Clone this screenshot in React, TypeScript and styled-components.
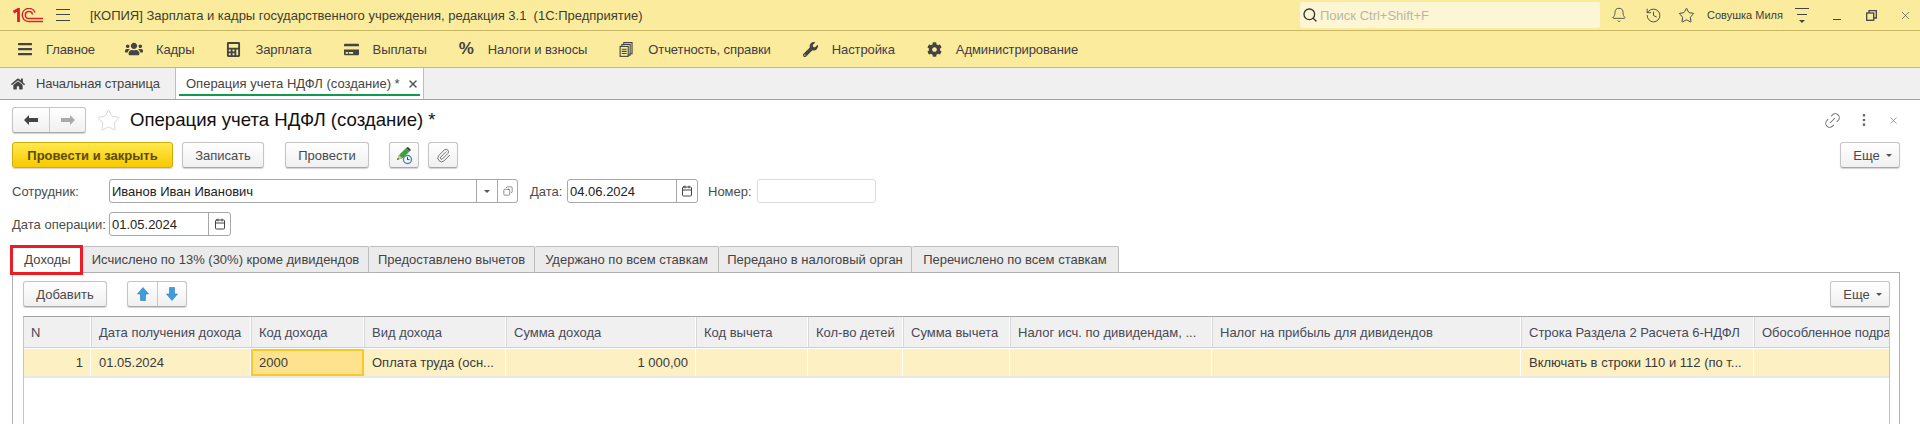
import React from 'react';
import styled, { createGlobalStyle } from 'styled-components';
import { FaBars, FaCalculator, FaCog, FaCreditCard, FaHome, FaUsers, FaWrench } from 'react-icons/fa';
import { Bell, Calendar, Copy, History, Link2, MoreVertical, Paperclip, Search, Star, X } from 'lucide-react';

const GlobalStyle = createGlobalStyle`
  html, body {
    margin: 0;
    height: 424px;
    overflow: hidden;
    background: #fff;
    font-family: "Liberation Sans", Arial, sans-serif;
    font-size: 13px;
    color: #4a4a4a;
  }
`;

const Page = styled.div`
  width: 1920px;
  height: 424px;
  overflow: hidden;
  display: flex;
  flex-direction: column;
`;

const TitleBar = styled.div`
  height: 30px;
  flex: none;
  display: flex;
  align-items: center;
  background: #fbec9d;
  border-bottom: 1px solid #c9b966;
`;

const LogoBox = styled.div`
  width: 56px;
  padding-left: 13px;
  box-sizing: border-box;
  display: flex;
`;

const Burger = styled.div`
  width: 14px;
  height: 12px;
  margin-right: 20px;
  border-top: 1px solid #444;
  border-bottom: 1px solid #444;
  box-sizing: border-box;
  position: relative;

  &::after {
    content: '';
    position: absolute;
    left: 0;
    right: 0;
    top: 4px;
    height: 1px;
    background: #444;
  }
`;

const AppTitle = styled.div`
  color: #403c30;
  flex: 1;
`;

const SearchBox = styled.div`
  width: 300px;
  height: 26px;
  flex: none;
  box-sizing: border-box;
  padding-left: 2px;
  border-radius: 2px;
  background: #fdf6d4;
  color: #b9b6a6;
  display: flex;
  align-items: center;
  gap: 2px;
`;

const TopIcons = styled.div`
  display: flex;
  align-items: center;
  width: 320px;
  flex: none;
  padding-left: 11px;
  box-sizing: border-box;
  color: #444;
`;

const TopSlot = styled.div<{ $w: number }>`
  width: ${p => p.$w}px;
  flex: none;
  display: flex;
  align-items: center;
`;

const UserName = styled.div`
  width: 88px;
  flex: none;
  font-size: 11px;
  color: #3e3e3e;
`;

const DropLines = styled.div`
  width: 14px;
  height: 15px;
  box-sizing: border-box;
  border-top: 1px solid #444;
  position: relative;

  &::before {
    content: '';
    position: absolute;
    left: 2px;
    right: 2px;
    top: 5px;
    height: 1px;
    background: #444;
  }

  &::after {
    content: '';
    position: absolute;
    left: 4px;
    bottom: 0;
    border: 3px solid transparent;
    border-top: 3px solid #444;
    border-bottom: 0;
  }
`;

const Minimize = styled.div`
  width: 8px;
  height: 1px;
  margin-top: 9px;
  background: #444;
`;

const MenuBar = styled.div`
  height: 36px;
  flex: none;
  display: flex;
  align-items: center;
  padding-left: 1px;
  background: #fbec9d;
  border-bottom: 1px solid #c9b966;
`;

const MenuItem = styled.div`
  display: flex;
  align-items: center;
  gap: 14px;
  padding: 0 16px;
  color: #403c4a;
  letter-spacing: -0.1px;
`;

const MenuIcon = styled.span<{ $size?: number }>`
  width: 15px;
  height: 18px;
  flex: none;
  display: flex;
  align-items: center;
  justify-content: center;
  color: #444;

  svg {
    width: ${p => p.$size ?? 15}px;
    height: ${p => p.$size ?? 15}px;
    flex: none;
  }
`;

const PercentIcon = styled.span`
  font-size: 17px;
  font-weight: 700;
  letter-spacing: 0;
`;

const TabsBar = styled.div`
  height: 31px;
  flex: none;
  display: flex;
  background: #f0f0f0;
  border-bottom: 1px solid #a5a5a5;
`;

const HomeTab = styled.div`
  width: 176px;
  box-sizing: border-box;
  padding-left: 11px;
  display: flex;
  align-items: center;
  gap: 11px;
  border-right: 1px solid #bdbdbd;
  color: #444;
  letter-spacing: -0.1px;

  svg {
    width: 14px;
    height: 14px;
    color: #444;
  }
`;

const ActiveTab = styled.div`
  width: 248px;
  box-sizing: border-box;
  padding: 0 0 0 10px;
  display: flex;
  align-items: center;
  background: #fff;
  border-right: 1px solid #bdbdbd;
  position: relative;
  color: #444;

  &::after {
    content: '';
    position: absolute;
    left: 3px;
    right: 3px;
    bottom: 3px;
    height: 2px;
    background: #0f9a4c;
  }
`;

const TabClose = styled.span`
  margin-left: 7px;
  display: flex;
  color: #555;
`;

const Form = styled.div`
  flex: none;
  display: flex;
  flex-direction: column;
  padding: 8px 20px 0 12px;
`;

const Row = styled.div<{ $h: number; $mb: number }>`
  height: ${p => p.$h}px;
  flex: none;
  margin-bottom: ${p => p.$mb}px;
  display: flex;
  align-items: center;
`;

const ButtonBase = styled.div<{ $w: number; $ml?: number }>`
  width: ${p => p.$w}px;
  height: 26px;
  flex: none;
  margin-left: ${p => p.$ml ?? 0}px;
  box-sizing: border-box;
  display: flex;
  align-items: center;
  justify-content: center;
  border: 1px solid #c4c4c4;
  border-bottom-color: #a8a8a8;
  border-radius: 3px;
  background: linear-gradient(#ffffff, #f0f0f0);
  box-shadow: 0 1px 1px rgba(0, 0, 0, 0.18);
  color: #4a4a4a;
`;

const PrimaryButton = styled(ButtonBase)`
  font-weight: 700;
  color: #5a4b00;
  border-color: #cfae0a;
  background: linear-gradient(#ffe94f, #f6c900);
`;

const MoreButton = styled(ButtonBase)`
  gap: 6px;
  padding-left: 5px;
  margin-left: auto;
`;

const Caret = styled.span`
  width: 0;
  height: 0;
  border: 3px solid transparent;
  border-top: 3px solid #555;
  border-bottom: 0;
`;

const Split = styled.div<{ $w: number; $ml?: number }>`
  width: ${p => p.$w}px;
  height: 26px;
  flex: none;
  margin-left: ${p => p.$ml ?? 0}px;
  display: grid;
  grid-template-columns: 1fr 1fr;
  box-sizing: border-box;
  border: 1px solid #c4c4c4;
  border-bottom-color: #a8a8a8;
  border-radius: 3px;
  background: linear-gradient(#ffffff, #f0f0f0);
  box-shadow: 0 1px 1px rgba(0, 0, 0, 0.18);
`;

const SplitPart = styled.div`
  display: flex;
  align-items: center;
  justify-content: center;

  & + & {
    border-left: 1px solid #c9c9c9;
  }
`;

const FormTitle = styled.div`
  margin-left: 9px;
  font-size: 18.6px;
  color: #111;
  flex: 1;
`;

const StarSlot = styled.div`
  margin-left: 10px;
  display: flex;
  color: #d4d4d4;
`;

const HeadTools = styled.div`
  display: flex;
  align-items: center;
  color: #666;
  gap: 14px;
  padding-right: 1px;

  svg:last-child {
    margin-left: 2px;
  }
`;

const FieldLabel = styled.div<{ $w: number; $ml?: number }>`
  width: ${p => p.$w}px;
  flex: none;
  margin-left: ${p => p.$ml ?? 0}px;
  color: #4c4c4c;
`;

const Field = styled.div<{ $w: number; $pale?: boolean }>`
  width: ${p => p.$w}px;
  height: 24px;
  flex: none;
  box-sizing: border-box;
  display: flex;
  align-items: center;
  border: 1px solid ${p => (p.$pale ? '#dcdcdc' : '#a8a8a8')};
  border-radius: 3px;
  background: #fff;
  color: #222;
`;

const FieldValue = styled.div`
  flex: 1;
  padding-left: 2px;
`;

const FieldAddon = styled.div<{ $w: number }>`
  width: ${p => p.$w}px;
  height: 100%;
  flex: none;
  display: flex;
  align-items: center;
  justify-content: center;
  box-sizing: border-box;
  border-left: 1px solid #a8a8a8;
  color: #444;
`;

const FormTabs = styled.div`
  height: 27px;
  flex: none;
  display: flex;
  margin: 10px 0 -1px;
`;

const FormTab = styled.div<{ $w: number; $active?: boolean }>`
  width: ${p => p.$w}px;
  flex: none;
  box-sizing: border-box;
  padding-top: 5px;
  display: flex;
  justify-content: center;
  background: ${p => (p.$active ? '#fff' : '#ebebeb')};
  border: 1px solid #bdbdbd;
  border-left-width: ${p => (p.$active ? 1 : 0)}px;
  border-bottom: ${p => (p.$active ? '0' : '1px solid #b0b0b0')};
  border-radius: 2px 2px 0 0;
  color: #444;
  position: relative;
  z-index: ${p => (p.$active ? 1 : 0)};

  ${p =>
    p.$active &&
    `&::after {
      content: '';
      position: absolute;
      left: -3px;
      top: -2px;
      width: 73px;
      height: 30px;
      box-sizing: border-box;
      border: 3px solid #ed1c24;
    }`}
`;

const TabPanel = styled.div`
  height: 220px;
  flex: none;
  box-sizing: border-box;
  padding: 8px 9px 0 10px;
  border: 1px solid #b0b0b0;
`;

const PanelToolbar = styled.div`
  height: 26px;
  display: flex;
  align-items: center;
  margin-bottom: 9px;
`;

const columns = '67px 160px 113px 142px 190px 112px 95px 107px 202px 309px 233px 137px';

const Table = styled.div`
  border: 1px solid #c4c4c4;
  border-top: 1px solid #a5a5a5;
  height: 180px;
  overflow: hidden;
`;

const HeaderRow = styled.div`
  display: grid;
  grid-template-columns: ${columns};
  height: 30px;
  background: #f0f0f0;
  border-bottom: 1px solid #cfcfcf;
`;

const HeaderCell = styled.div`
  box-sizing: border-box;
  padding: 8px 0 0 7px;
  border-right: 1px solid #fff;
  border-left: 1px solid #d8d8d8;
  white-space: nowrap;
  overflow: hidden;
  color: #48485a;

  &:first-child {
    border-left: 0;
  }
`;

const DataRow = styled.div`
  display: grid;
  grid-template-columns: ${columns};
  height: 27px;
  margin-top: 1px;
  background: #fdf0c3;
  border-bottom: 2px solid #e8e8e8;
  box-sizing: content-box;
`;

const DataCell = styled.div<{ $right?: boolean; $current?: boolean }>`
  box-sizing: border-box;
  display: flex;
  align-items: center;
  justify-content: ${p => (p.$right ? 'flex-end' : 'flex-start')};
  padding: ${p => (p.$right ? '0 7px 0 0' : p.$current ? '0 0 0 6px' : '0 0 0 8px')};
  border-right: 1px solid #fff;
  white-space: nowrap;
  overflow: hidden;
  color: #3a3a3a;
  ${p => p.$current && 'background: #fee28e; border: 2px solid #fcc924;'}
`;

const Pencil = () => (
  <svg width="20" height="20" viewBox="0 0 20 20">
    <path d="M3 15l2-5 7-7 4 3-7 7z" fill="#3da33d" />
    <path d="M12 3l2-1 3 3-1 1z" fill="#333" />
    <path d="M3 15l2-5 3 3z" fill="#e3c08c" />
    <path d="M3 15l1-2 1 1z" fill="#333" />
    <circle cx="13.5" cy="14.5" r="4" fill="#fff" stroke="#4a86b8" strokeWidth="1.4" />
    <path d="M13.5 12.2v2.5h2" fill="none" stroke="#333" strokeWidth="1" />
  </svg>
);

const Logo = () => (
  <svg width="30" height="15" viewBox="0 0 30 15">
    <g fill="none" stroke="#d8232a">
      <path d="M0.5 4.2L5.5 1.2V14" strokeWidth="2.8" />
      <path d="M22 4.5A6.6 6.6 0 1 0 16 13.6H30" strokeWidth="1.5" />
      <path d="M19.5 6.5A3.6 3.6 0 1 0 16 10.6H30" strokeWidth="1.5" />
    </g>
  </svg>
);

const DocsIcon = () => (
  <svg viewBox="0 0 15 16">
    <g fill="none" stroke="#444" strokeWidth="1.2">
      <path d="M4.6 3V0.7H13.4V12.5H11" />
      <path d="M2.6 5V2.7H11.4V14H9" />
      <rect x="0.7" y="4.7" width="8.6" height="10.6" />
      <path d="M2.4 7.7h5.2M2.4 10h5.2M2.4 12.3h5.2" />
    </g>
  </svg>
);

const RestoreIcon = () => (
  <svg width="11" height="11" viewBox="0 0 11 11">
    <g fill="none" stroke="#444" strokeWidth="1.3">
      <rect x="0.7" y="3" width="7" height="7.3" />
      <path d="M3 3V0.7H10.3V8H7.7" />
    </g>
  </svg>
);

const Arrow = ({ dir, color }: { dir: 'left' | 'right'; color: string }) => (
  <svg width="14" height="10" viewBox="0 0 14 10">
    <path d={dir === 'left' ? 'M0 5l5-5v3h9v4H5v3z' : 'M14 5L9 0v3H0v4h9v3z'} fill={color} />
  </svg>
);

const BlueArrow = ({ up }: { up?: boolean }) => (
  <svg width="12" height="14" viewBox="0 0 12 14">
    <path
      d={up ? 'M6 0.5L11.5 7H8.5V13.5H3.5V7H0.5z' : 'M6 13.5L11.5 7H8.5V0.5H3.5V7H0.5z'}
      fill="#3f9be0"
      stroke="#2b78b5"
      strokeWidth="0.6"
    />
  </svg>
);

const menu = [
  { icon: <FaBars />, size: 16, label: 'Главное' },
  { icon: <FaUsers />, size: 18, label: 'Кадры' },
  { icon: <FaCalculator />, size: 15, label: 'Зарплата' },
  { icon: <FaCreditCard />, size: 15, label: 'Выплаты' },
  { icon: <PercentIcon>%</PercentIcon>, size: 15, label: 'Налоги и взносы' },
  { icon: <DocsIcon />, size: 15, label: 'Отчетность, справки' },
  { icon: <FaWrench />, size: 15, label: 'Настройка' },
  { icon: <FaCog />, size: 15, label: 'Администрирование' },
];

const formTabs = [
  { w: 286, label: 'Исчислено по 13% (30%) кроме дивидендов' },
  { w: 166, label: 'Предоставлено вычетов' },
  { w: 184, label: 'Удержано по всем ставкам' },
  { w: 193, label: 'Передано в налоговый орган' },
  { w: 207, label: 'Перечислено по всем ставкам' },
];

const headers = [
  'N',
  'Дата получения дохода',
  'Код дохода',
  'Вид дохода',
  'Сумма дохода',
  'Код вычета',
  'Кол-во детей',
  'Сумма вычета',
  'Налог исч. по дивидендам, ...',
  'Налог на прибыль для дивидендов',
  'Строка Раздела 2 Расчета 6-НДФЛ',
  'Обособленное подразделение',
];

const App: React.FC = () => (
  <Page>
    <GlobalStyle />
    <TitleBar>
      <LogoBox>
        <Logo />
      </LogoBox>
      <Burger />
      <AppTitle>[КОПИЯ] Зарплата и кадры государственного учреждения, редакция 3.1&nbsp; (1С:Предприятие)</AppTitle>
      <SearchBox>
        <Search size={16} color="#333" />
        Поиск Ctrl+Shift+F
      </SearchBox>
      <TopIcons>
        <TopSlot $w={34}><Bell size={16} strokeWidth={1.3} /></TopSlot>
        <TopSlot $w={33}><History size={17} strokeWidth={1.3} /></TopSlot>
        <TopSlot $w={29}><Star size={17} strokeWidth={1.4} /></TopSlot>
        <UserName>Совушка Миля</UserName>
        <TopSlot $w={38}><DropLines /></TopSlot>
        <TopSlot $w={33}><Minimize /></TopSlot>
        <TopSlot $w={33}><RestoreIcon /></TopSlot>
        <TopSlot $w={20}><X size={13} strokeWidth={1.2} /></TopSlot>
      </TopIcons>
    </TitleBar>

    <MenuBar>
      {menu.map(item => (
        <MenuItem key={item.label}>
          <MenuIcon $size={item.size}>{item.icon}</MenuIcon>
          {item.label}
        </MenuItem>
      ))}
    </MenuBar>

    <TabsBar>
      <HomeTab>
        <FaHome />
        Начальная страница
      </HomeTab>
      <ActiveTab>
        Операция учета НДФЛ (создание) *
        <TabClose><X size={12} strokeWidth={3} /></TabClose>
      </ActiveTab>
    </TabsBar>

    <Form>
      <Row $h={24} $mb={10}>
        <Split $w={74}>
          <SplitPart><Arrow dir="left" color="#444" /></SplitPart>
          <SplitPart><Arrow dir="right" color="#aaa" /></SplitPart>
        </Split>
        <StarSlot><Star size={25} strokeWidth={0.9} /></StarSlot>
        <FormTitle>Операция учета НДФЛ (создание) *</FormTitle>
        <HeadTools>
          <Link2 size={19} strokeWidth={1.2} style={{ transform: 'rotate(-45deg)' }} />
          <MoreVertical size={16} strokeWidth={2} />
          <X size={11} strokeWidth={1.3} />
        </HeadTools>
      </Row>

      <Row $h={26} $mb={11}>
        <PrimaryButton $w={161}>Провести и закрыть</PrimaryButton>
        <ButtonBase $w={82} $ml={9}>Записать</ButtonBase>
        <ButtonBase $w={84} $ml={21}>Провести</ButtonBase>
        <ButtonBase $w={30} $ml={20}><Pencil /></ButtonBase>
        <ButtonBase $w={30} $ml={9}><Paperclip size={15} strokeWidth={1.6} color="#777" /></ButtonBase>
        <MoreButton $w={60}>Еще <Caret /></MoreButton>
      </Row>

      <Row $h={24} $mb={9}>
        <FieldLabel $w={97}>Сотрудник:</FieldLabel>
        <Field $w={409}>
          <FieldValue>Иванов Иван Иванович</FieldValue>
          <FieldAddon $w={21}><Caret /></FieldAddon>
          <FieldAddon $w={20}><Copy size={10} strokeWidth={1.4} style={{ transform: 'scaleX(-1)' }} /></FieldAddon>
        </Field>
        <FieldLabel $w={37} $ml={12}>Дата:</FieldLabel>
        <Field $w={131}>
          <FieldValue>04.06.2024</FieldValue>
          <FieldAddon $w={21}><Calendar size={12} strokeWidth={2} /></FieldAddon>
        </Field>
        <FieldLabel $w={49} $ml={10}>Номер:</FieldLabel>
        <Field $w={119} $pale />
      </Row>

      <Row $h={24} $mb={0}>
        <FieldLabel $w={97}>Дата операции:</FieldLabel>
        <Field $w={122}>
          <FieldValue>01.05.2024</FieldValue>
          <FieldAddon $w={22}><Calendar size={12} strokeWidth={2} /></FieldAddon>
        </Field>
      </Row>

      <FormTabs>
        <FormTab $w={71} $active>Доходы</FormTab>
        {formTabs.map(tab => (
          <FormTab key={tab.label} $w={tab.w}>{tab.label}</FormTab>
        ))}
      </FormTabs>

      <TabPanel>
        <PanelToolbar>
          <ButtonBase $w={84}>Добавить</ButtonBase>
          <Split $w={60} $ml={20}>
            <SplitPart><BlueArrow up /></SplitPart>
            <SplitPart><BlueArrow /></SplitPart>
          </Split>
          <MoreButton $w={60}>Еще <Caret /></MoreButton>
        </PanelToolbar>
        <Table>
          <HeaderRow>
            {headers.map(h => (
              <HeaderCell key={h}>{h}</HeaderCell>
            ))}
          </HeaderRow>
          <DataRow>
            <DataCell $right>1</DataCell>
            <DataCell>01.05.2024</DataCell>
            <DataCell $current>2000</DataCell>
            <DataCell>Оплата труда (осн...</DataCell>
            <DataCell $right>1 000,00</DataCell>
            <DataCell />
            <DataCell />
            <DataCell />
            <DataCell />
            <DataCell />
            <DataCell>Включать в строки 110 и 112 (по т...</DataCell>
            <DataCell />
          </DataRow>
        </Table>
      </TabPanel>
    </Form>
  </Page>
);

export default App;
